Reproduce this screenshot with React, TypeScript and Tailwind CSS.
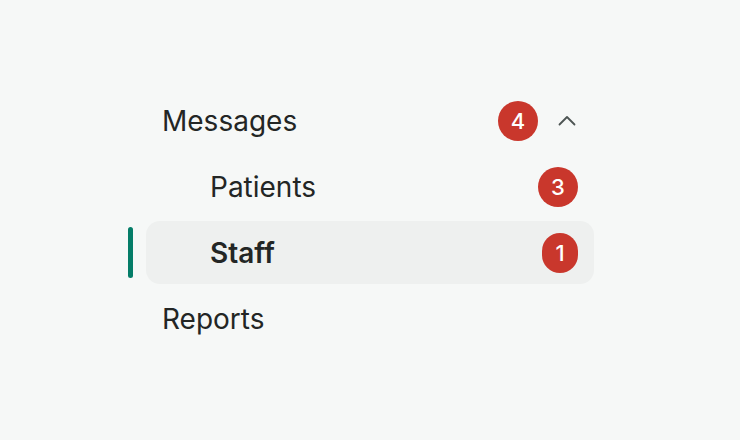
import type { ReactNode } from 'react';

const Badge = ({ n, w }: { n: number; w: string }) => (
  <span
    className={`${w} h-10 rounded-full bg-[#c9372c] text-white text-[22px] font-medium flex items-center justify-center leading-none`}
  >
    {n}
  </span>
);

const Row = ({
  children,
  active,
  indent,
}: {
  children: ReactNode;
  active?: boolean;
  indent?: boolean;
}) => (
  <div
    className={`relative h-[63px] px-4 flex items-center rounded-[14px] ${active ? 'bg-[#eef0ef]' : ''}`}
  >
    {active && (
      <span className="absolute left-[-18px] top-[6px] bottom-[6px] w-[5px] rounded-full bg-[#047d68]" />
    )}
    <div className={`flex-1 flex items-center ${indent ? 'pl-12' : ''}`}>{children}</div>
  </div>
);

export default function App() {
  return (
    <div
      className="w-full min-h-screen h-[440px] bg-[#f6f8f7] flex items-center justify-center text-[#232625]"
      style={{ fontFamily: 'Inter, "Noto Sans", sans-serif' }}
    >
      <nav className="w-[448px] flex flex-col gap-[3px] -mt-px">
        <Row>
          <span className="flex-1 text-[28px]">Messages</span>
          <Badge n={4} w="w-10" />
          <svg width="22" height="20" viewBox="0 0 22 20" className="ml-[18px] text-[#4d5553]">
            <path
              d="M3.5 13.5 L11 6 L18.5 13.5"
              fill="none"
              stroke="currentColor"
              strokeWidth="1.8"
              strokeLinecap="round"
              strokeLinejoin="round"
            />
          </svg>
        </Row>
        <Row indent>
          <span className="flex-1 text-[28px]">Patients</span>
          <Badge n={3} w="w-10" />
        </Row>
        <Row indent active>
          <span className="flex-1 text-[28px] font-semibold">Staff</span>
          <Badge n={1} w="w-9" />
        </Row>
        <Row>
          <span className="flex-1 text-[28px]">Reports</span>
        </Row>
      </nav>
    </div>
  );
}
